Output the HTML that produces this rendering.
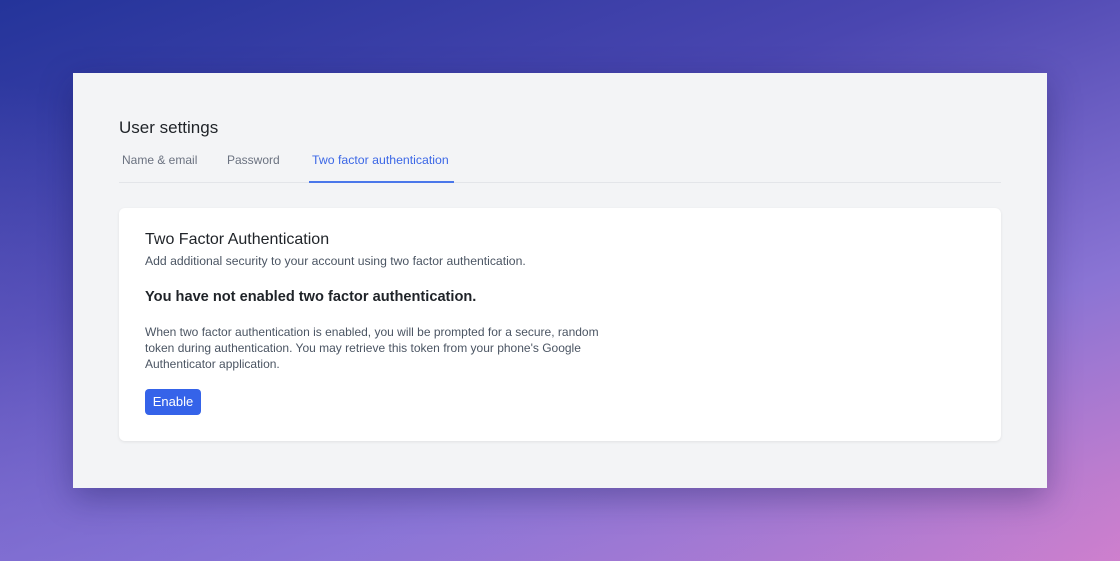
<!DOCTYPE html>
<html><head><style>
*{margin:0;padding:0;box-sizing:border-box}
body{width:1120px;height:561px;overflow:hidden;font-family:"Liberation Sans",sans-serif;position:relative;
background:linear-gradient(160deg,#24349a 0%,#4a46b0 35%,#8a74d4 70%,#d480cc 100%);}
.bg2{position:absolute;inset:0;background:linear-gradient(20deg,rgba(140,120,220,.5) 0%,rgba(140,120,220,0) 50%);}
.panel{position:absolute;left:73px;top:73px;width:974px;height:415px;background:#f3f4f6;box-shadow:0 10px 30px rgba(20,20,80,.35)}
.t{position:absolute;white-space:nowrap}
.card{position:absolute;left:46px;top:135px;width:882px;height:233px;background:#fff;border-radius:6px;box-shadow:0 1px 3px rgba(0,0,0,.08)}
</style></head><body>
<div class="bg2"></div>
<div class="panel">
<div class="t" style="left:46px;top:45px;font-size:17px;color:#1f2328">User settings</div>
<div class="t" style="left:49px;top:80px;font-size:12px;color:#6b7280">Name &amp; email</div>
<div class="t" style="left:154px;top:80px;font-size:12px;color:#6b7280">Password</div>
<div class="t" style="left:239px;top:80px;font-size:12.3px;color:#3b67e6">Two factor authentication</div>
<div style="position:absolute;left:46px;top:109px;width:882px;height:1px;background:#e3e5e9"></div>
<div style="position:absolute;left:236px;top:108px;width:145px;height:2px;background:#4a77ea"></div>
<div class="card">
<div class="t" style="left:26px;top:23px;font-size:16px;color:#1f2328">Two Factor Authentication</div>
<div class="t" style="left:26px;top:46px;font-size:12.2px;color:#4b5563">Add additional security to your account using two factor authentication.</div>
<div class="t" style="left:26px;top:81px;font-size:14.6px;font-weight:bold;color:#1f2328">You have not enabled two factor authentication.</div>
<div style="position:absolute;left:26px;top:116px;width:470px;font-size:12px;line-height:16px;color:#4b5563">When two factor authentication is enabled, you will be prompted for a secure, random token during authentication. You may retrieve this token from your phone's Google Authenticator application.</div>
<div style="position:absolute;left:26px;top:181px;width:56px;height:26px;background:#3563e9;border-radius:4px;color:#fff;font-size:13px;text-align:center;line-height:26px">Enable</div>
</div>
</div>
</body></html>
